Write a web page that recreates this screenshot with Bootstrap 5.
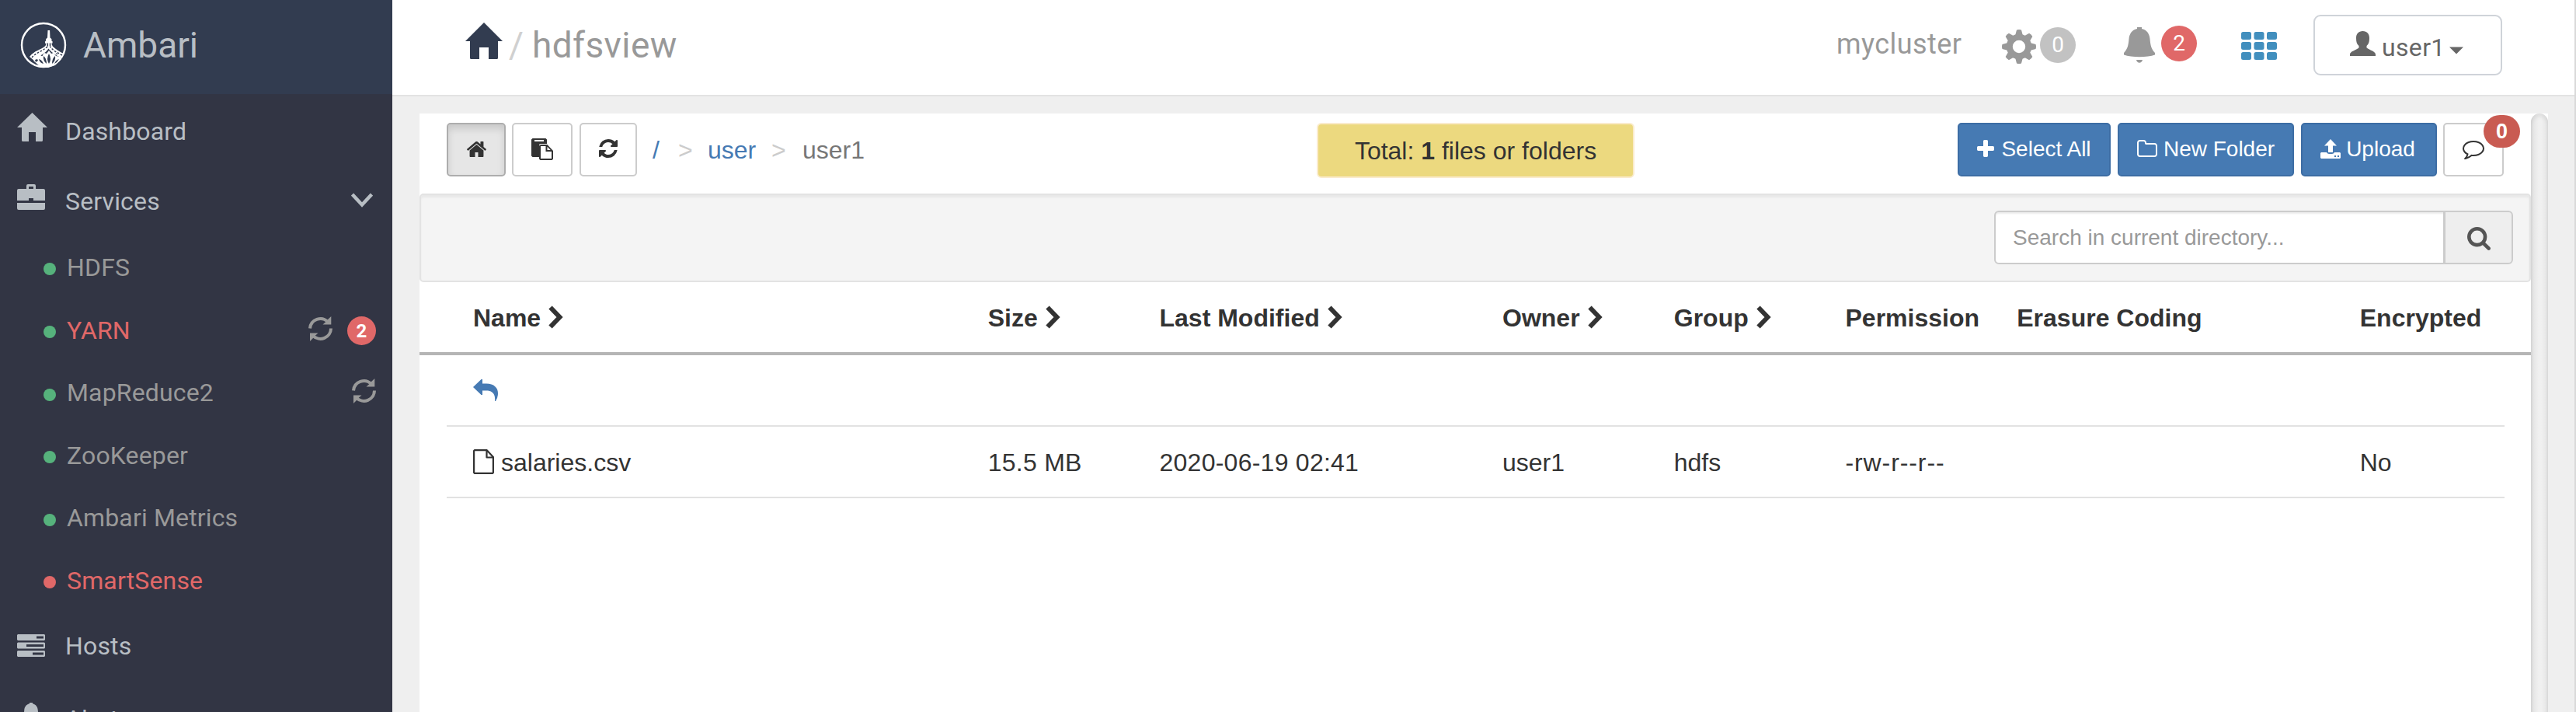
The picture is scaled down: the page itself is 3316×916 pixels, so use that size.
<!DOCTYPE html>
<html lang="en">
<head>
<meta charset="utf-8">
<title>Ambari - hdfsview</title>
<link href="https://cdn.jsdelivr.net/npm/bootstrap@5.3.0/dist/css/bootstrap.min.css" rel="stylesheet">
<style>
html,body{height:916px;overflow:hidden}
body{background:#efefef;font-family:"Liberation Sans",Arial,sans-serif;font-size:32px;line-height:1;color:#333}
svg{display:block;flex:none}
.app-shell{height:916px}
.side{width:505px;background:#323544;font-family:Roboto,sans-serif;letter-spacing:.15px;overflow:hidden}
.side-head{height:121px;background:#323c50;color:#b8bec4;font-size:46px;padding-left:26px}
.side-head .title{margin:-5px 0 0 21px;letter-spacing:0}
.side-item{color:#b8bec4;padding-left:22px;text-decoration:none}
.side-item .ico{width:62px}
.side-sub{height:80.6px;color:#999;padding-left:56px;padding-right:21px;text-decoration:none}
.side-sub.bad{color:#e06868}
.dot{width:16px;height:16px;border-radius:50%;background:#56b27c;margin:5px 14px 0 0;flex:none}
.dot.down{background:#e06868}
.count{border-radius:50%;color:#fff;background:#e06868;display:flex;align-items:center;justify-content:center;flex:none}
.count-sm{width:37px;height:37px;font-size:24px;font-weight:700;margin:2px 0 0 19px;letter-spacing:0}
.topbar{height:124px;background:#fff;border-bottom:2px solid #e3e3e3;font-family:Roboto,sans-serif;color:#999;padding-left:94px;padding-right:93px}
.crumb-title{font-size:46px;margin-top:35px;letter-spacing:.4px}
.cluster{font-size:36px;width:213px;margin-top:39px;letter-spacing:.45px}
.count-lg{width:46px;height:46px;font-size:28px}
.user-btn{width:243px;height:78px;margin:19px 0 0 47px;border:2px solid #cfd3d9;border-radius:9px;color:#666;padding:0}
.user-btn:hover{color:#666}
.edge{width:2px;background:#d9d9d9}
.page-area{padding:22px 34px 0 35px}
.panel{width:2718px;background:#fff}
.tools{height:103px;padding:12px 35px 0}
.tool-btn{height:69px;border:2px solid #ccc;border-radius:5px;background:#fff;padding:0;display:flex;align-items:center;justify-content:center;flex:none;font-size:28px;line-height:1;color:#333}
.tool-btn.on{background:#e6e6e6;border-color:#adadad;box-shadow:inset 0 6px 10px rgba(0,0,0,.125)}
.tool-btn.blue{background:#467ab3;border-color:#3d6da4;color:#fff;padding-bottom:2px}
.crumbs{margin-left:20px;margin-top:18.5px;width:855px;color:#777}
.crumbs a{color:#467ab3;text-decoration:none}
.crumbs i{font-style:normal;color:#ccc}
.total{width:409px;height:71px;border:2px solid #faebcc;border-radius:6px;background:#ecd97f}
.note-count{position:absolute;left:50px;top:-12px;width:47px;height:42px;border-radius:21px;background:#c95b52;color:#fff;font-weight:700;font-size:27px;display:flex;align-items:center;justify-content:center}
.filter-well{height:114px;background:#f4f4f4;border:2px solid #e3e3e3;border-radius:5px;box-shadow:inset 0 3px 3px rgba(0,0,0,.05);padding:20px 21px 0 0}
.search{width:668px;height:69px}
.search .form-control{height:69px;border:2px solid #ccc;border-radius:6px 0 0 6px;font-size:28px;line-height:1;padding:0 22px;box-shadow:inset 0 2px 2px rgba(0,0,0,.075)}
.search .form-control::placeholder{color:#999}
.search .input-group-text{width:89px;border:2px solid #ccc;border-radius:0 6px 6px 0;background:#eee;padding:0;justify-content:center}
.grid-row{--bs-gutter-x:0;padding-top:2px;align-items:center;white-space:nowrap}
.grid-row>div{padding-left:34.5px}
.heads{height:94px;border-bottom:4px solid #b5b5b5;padding-left:35px;padding-right:34px;font-weight:700;flex:none}
.entries{padding:0 34px 0 35px}
.entry{height:92px;border-bottom:2px solid #e2e2e2}
.entry>div:first-child,.heads>div:first-child{padding-left:34px}
.stamp{letter-spacing:.25px}
.perm{letter-spacing:.9px}
.chev{margin-left:10px}
.track{width:22px;background:#fff}
.track div{height:100%;border-radius:11px 11px 0 0;background:linear-gradient(90deg,#d9d9d9 0,#e6e6e6 15%,#f0f0f0 45%,#f0f0f0 60%,#e8e8e8 88%,#dfdfdf 100%);box-shadow:inset 0 4px 5px rgba(0,0,0,.07)}
</style>
</head>
<body>
<svg width="0" height="0" class="position-absolute" aria-hidden="true">
<symbol id="house" viewBox="0 0 39 37" preserveAspectRatio="none"><path fill="currentColor" d="M19.5 0L39 19H33V35.5Q33 37 31.5 37H24V25H15V37H7.5Q6 37 6 35.5V19H0Z"/></symbol>
<symbol id="bell" viewBox="0 0 40 46"><path fill="currentColor" d="M17 0h6v2c7 1.500 10 7 10.500 13 .8 9.500 2 13 6.500 18v2.500c-5 1.800-12 2.800-20 2.800S5 37.300 0 35.500V33c4.500-5 5.700-8.500 6.500-18C7 9 10 3.500 17 2zM16 42h8c-1 5-7 5-8 0z"/></symbol>
<symbol id="cycle" viewBox="0 0 31 32"><path fill="none" stroke="currentColor" stroke-width="4" d="M2 15.500A13.500 13.500 0 0 1 25 7M29 15.500A13.500 13.500 0 0 1 6 25"/><path fill="currentColor" d="M29.300 0V10.500H18.500L23 6.500 25 4zM2 32V21.500H12.500L8.500 25 6 28z"/></symbol>
<symbol id="chev" viewBox="0 0 19 30"><path fill="none" stroke="currentColor" stroke-width="6" d="M2.500 2.500L14.500 15 2.500 27.500"/></symbol>
<symbol id="refresh" viewBox="128 128 1536 1536"><path fill="currentColor" d="M1639 1056q0 5-1 7-64 268-268 434.500t-478 166.500q-146 0-282.500-55t-243.500-157l-129 129q-19 19-45 19t-45-19-19-45v-448q0-26 19-45t45-19h448q26 0 45 19t19 45-19 45l-137 137q71 66 161 102t187 36q134 0 250-65t186-179q11-17 53-117 8-23 30-23h192q13 0 22.500 9.500t9.500 22.500zm25-800v448q0 26-19 45t-45 19h-448q-26 0-45-19t-19-45 19-45l138-138q-148-137-349-137-134 0-250 65t-186 179q-11 17-53 117-8 23-30 23h-199q-13 0-22.500-9.500t-9.500-22.500v-7q65-268 270-434.500t480-166.500q146 0 284 55.500t245 156.500l130-129q19-19 45-19t45 19 19 45z"/></symbol>
</svg>

<div class="app-shell d-flex">
  <nav class="side flex-shrink-0 d-flex flex-column">
    <div class="side-head d-flex align-items-center flex-shrink-0">
      <svg width="60" height="60" viewBox="0 0 60 60" style="margin-top:-6px" fill="none" stroke="#fff">
        <circle cx="30" cy="30" r="28" stroke-width="2.400"/>
        <path fill="#fff" stroke="none" d="M35.500 11h2.600l.4 9.500 2 1.700-.2 2 1.500 1.600-.6 2.200h-1l1.500 3.500c4 4 9 7 14 9.500l-2.500 5.500C45 43 39 38 36.500 34.500 33 40 25 44 18 50l-6-5c6-8 15-9 20.500-14l1-3h-1.200l-.5-2.200 1.400-1.600-.2-2 2-1.700z"/>
        <path stroke="#323c50" stroke-width="1.400" stroke-dasharray="2.600 1.800" d="M15 46c6-7 14-8 20.500-14.500M54 43c-6-3-12-6-15.500-11"/>
        <path stroke="#323c50" stroke-width="1.500" d="M35.300 27.500v4M38.500 27.500v4"/>
        <path fill="#fff" stroke="none" d="M17 50l8-7 3 1 3-4 3 1 3-4 3 4 3-1 3 4 5 1 2 3-8 8-9 3h-9z"/>
        <g fill="#323c50" stroke="none"><path d="M37 41q-4 7 0 13 4-6 0-13zM30 44q-1 6 4 10 0-7-4-10zM45 44q1 6-4 10 0-7 4-10zM24 48q1 5 6 6-2-5-6-6zM50 48q-2 4-6 6 2-5 6-6z"/><path d="M19 49l3-1 1 2-3 2zM27 43l2-1v2zM46 40l2 1-1 2z"/></g>
      </svg>
      <span class="title">Ambari</span>
    </div>
    <a class="side-item d-flex align-items-center flex-shrink-0" style="height:96px"><span class="ico"><svg width="39" height="37" style="margin-top:-11px"><use href="#house"/></svg></span>Dashboard</a>
    <a class="side-item d-flex align-items-center flex-shrink-0" style="height:84px;margin-bottom:2.700px">
      <span class="ico"><svg width="36" height="33" viewBox="0 0 36 33" style="margin-top:-12px"><path fill="currentColor" fill-rule="evenodd" d="M12 6V2q0-2 2-2h8q2 0 2 2v4h10q2 0 2 2v13H21v-3h-6v3H0V8q0-2 2-2zM15 3v3h6V3zM0 24h36v7q0 2-2 2H2q-2 0-2-2z"/></svg></span>Services
      <svg class="ms-auto" width="28" height="20" viewBox="0 0 28 20" style="margin-right:25px;margin-top:-3px"><path fill="none" stroke="currentColor" stroke-width="4.500" d="M1.500 2L14 15.500 26.500 2"/></svg>
    </a>
    <a class="side-sub d-flex align-items-center flex-shrink-0"><span class="dot"></span>HDFS</a>
    <a class="side-sub bad d-flex align-items-center flex-shrink-0"><span class="dot"></span>YARN<svg class="ms-auto" width="31" height="32" style="color:#999;margin-top:-4px"><use href="#cycle"/></svg><span class="count count-sm">2</span></a>
    <a class="side-sub d-flex align-items-center flex-shrink-0"><span class="dot"></span>MapReduce2<svg class="ms-auto" width="31" height="32" style="margin-top:-5px"><use href="#cycle"/></svg></a>
    <a class="side-sub d-flex align-items-center flex-shrink-0"><span class="dot"></span>ZooKeeper</a>
    <a class="side-sub d-flex align-items-center flex-shrink-0"><span class="dot"></span>Ambari Metrics</a>
    <a class="side-sub bad d-flex align-items-center flex-shrink-0"><span class="dot down"></span>SmartSense</a>
    <a class="side-item d-flex align-items-center flex-shrink-0" style="height:87.400px"><span class="ico"><svg width="36" height="29" viewBox="0 0 36 29"><path fill="currentColor" fill-rule="evenodd" d="M1 0h34l1 1v6l-1 1H1L0 7V1zM25 2.500v3h9v-3zM1 10.500h34l1 1v6l-1 1H1l-1-1v-6zM12 13v3h22v-3zM1 21h34l1 1v6l-1 1H1l-1-1v-6zM20 23.500v3h14v-3z"/></svg></span>Hosts</a>
    <a class="side-item d-flex align-items-center flex-shrink-0" style="height:100px"><span class="ico" style="padding-left:5px"><svg width="26" height="34" style="margin-top:-12px"><use href="#bell"/></svg></span>Alerts</a>
  </nav>

  <div class="flex-grow-1 d-flex flex-column">
    <header class="topbar d-flex align-items-start flex-shrink-0">
      <svg width="48" height="47" viewBox="0 0 48 47" style="color:#323c50;margin-top:29px"><path fill="currentColor" d="M24 0L48 24H42V45.500Q42 47 40.500 47H30V32H18V47H7.500Q6 47 6 45.500V24H0Z"/></svg>
      <span class="crumb-title" style="color:#d0d0d0;margin-left:8px;width:30px">/</span>
      <span class="crumb-title">hdfsview</span>
      <span class="cluster ms-auto">mycluster</span>
      <svg width="44" height="44" viewBox="-22 -22 44 44" style="margin-top:38px;color:#999"><circle r="12.200" fill="none" stroke="currentColor" stroke-width="8"/><g fill="currentColor"><path id="tooth" d="M-5-14L-3-21.500Q0-22.500 3-21.500L5-14V-12H-5zM-5 14L-3 21.500Q0 22.500 3 21.500L5 14V12H-5z"/><use href="#tooth" transform="rotate(45)"/><use href="#tooth" transform="rotate(90)"/><use href="#tooth" transform="rotate(135)"/></g></svg>
      <span class="count count-lg" style="background:#c2c2c2;margin:35px 0 0 5px">0</span>
      <svg width="40" height="46" style="margin:35px 0 0 62px"><use href="#bell"/></svg>
      <span class="count count-lg" style="margin:33px 0 0 8px">2</span>
      <svg width="46" height="36" viewBox="0 0 46 36" fill="#428fbe" style="margin:41px 0 0 57px"><rect width="13" height="10" rx="2.500"/><rect x="16.500" width="13" height="10" rx="2.500"/><rect x="33" width="13" height="10" rx="2.500"/><rect y="13" width="13" height="10" rx="2.500"/><rect x="16.500" y="13" width="13" height="10" rx="2.500"/><rect x="33" y="13" width="13" height="10" rx="2.500"/><rect y="26" width="13" height="10" rx="2.500"/><rect x="16.500" y="26" width="13" height="10" rx="2.500"/><rect x="33" y="26" width="13" height="10" rx="2.500"/></svg>
      <button class="user-btn btn d-flex align-items-start">
        <svg width="33" height="32" viewBox="0 0 33 32" style="margin:19px 0 0 45px"><path fill="currentColor" d="M16.500 0C22 0 25 3.500 25 9c0 5-1 8-3.500 10v2.500C25 24.500 33 26 33 30v2H0v-2c0-4 8-5.500 11.500-8.500V19C9 17 8 14 8 9c0-5.500 3-9 8.500-9z"/></svg>
        <span style="font:32px/1 Roboto,sans-serif;letter-spacing:.35px;margin:24px 0 0 8px;width:80px;text-align:left">user1</span>
        <svg width="18" height="10" viewBox="0 0 18 10" style="margin:39px 0 0 7px"><path fill="currentColor" d="M0 .5h18L9 9.500z"/></svg>
      </button>
    </header>

    <main class="page-area d-flex flex-grow-1">
      <section class="panel flex-shrink-0">
        <div class="tools d-flex align-items-start">
          <button class="tool-btn on" style="width:76px"><svg width="25" height="20" viewBox="90 256 1612 1280" preserveAspectRatio="none" style="margin-top:-2px"><path fill="currentColor" d="M1472 992v480q0 26-19 45t-45 19h-384v-384h-256v384h-384q-26 0-45-19t-19-45v-480q0-1 .5-3t.5-3l575-474 575 474q1 2 1 6zm223-69l-62 74q-8 9-21 11h-3q-13 0-21-7l-692-577-692 577q-12 8-24 7-13-2-21-11l-62-74q-8-10-7-23.500t11-21.500l719-599q32-26 76-26t76 26l244 204v-195q0-14 9-23t23-9h192q14 0 23 9t9 23v408l219 182q10 8 11 21.500t-7 23.500z"/></svg></button>
          <button class="tool-btn" style="width:78px;margin-left:8px"><svg width="28" height="28" viewBox="0 0 28 28" style="margin-top:-2px"><path fill="currentColor" fill-rule="evenodd" d="M1.500 0H18.500L20 1.500V7H12Q10 7 10 9V24H1.500L0 22.500V1.500zM4 2V4H16V2zM12 8H20.500L28 16V26.500L26.500 28H11.500L10 26.500V9.500zM12 10V26H26V17H18.500V10zM20.500 10.800V15H24.700z"/></svg></button>
          <button class="tool-btn" style="width:74px;margin-left:9px"><svg width="24" height="24" style="margin-top:-3px"><use href="#refresh"/></svg></button>
          <div class="crumbs d-flex"><a href="#" style="width:33px">/</a><i style="width:38px">&gt;</i><a href="#" style="width:82px">user</a><i style="width:40px">&gt;</i><span>user1</span></div>
          <div class="total d-flex align-items-center justify-content-center"><span>Total: <b>1</b> files or folders</span></div>
          <button class="tool-btn blue ms-auto" style="width:197px"><svg width="22" height="22" viewBox="192 128 1408 1408" style="margin:-2px 9px 0 0"><path fill="currentColor" d="M1600 736v192q0 40-28 68t-68 28h-416v416q0 40-28 68t-68 28h-192q-40 0-68-28t-28-68v-416h-416q-40 0-68-28t-28-68v-192q0-40 28-68t68-28h416v-416q0-40 28-68t68-28h192q40 0 68 28t28 68v416h416q40 0 68 28t28 68z"/></svg>Select All</button>
          <button class="tool-btn blue" style="width:227px;margin-left:9px"><svg width="26" height="22" viewBox="64 128 1664 1408" style="margin:-2px 8px 0 0"><path fill="currentColor" d="M1600 1312v-704q0-40-28-68t-68-28h-704q-40 0-68-28t-28-68v-64q0-40-28-68t-68-28h-320q-40 0-68 28t-28 68v960q0 40 28 68t68 28h1216q40 0 68-28t28-68zm128-704v704q0 92-66 158t-158 66h-1216q-92 0-158-66t-66-158v-960q0-92 66-158t158-66h320q92 0 158 66t66 158v32h672q92 0 158 66t66 158z"/></svg>New Folder</button>
          <button class="tool-btn blue" style="width:175px;margin-left:9px;padding-right:3px"><svg width="26" height="25" viewBox="0 0 26 25" style="margin:-1px 7px 0 0"><path fill="currentColor" fill-rule="evenodd" d="M13 0l8 8.500H16V17h-6V8.500H5zM1 17h7q1 2 3 2h4q2 0 3-2h7l1 1v6l-1 1H1l-1-1v-6zM18 21v2h2v-2zM22 21v2h2v-2z"/></svg>Upload</button>
          <button class="tool-btn position-relative" style="width:78px;margin-left:8px"><svg width="28" height="24" viewBox="0 256 1792 1536" style="margin:1px 0 0 0"><path fill="currentColor" d="M896 384q-204 0-381.500 69.500t-282 187.500-104.500 255q0 112 71.500 213.500t201.500 175.500l87 50-27 96q-24 91-70 172 152-63 275-171l43-38 57 6q69 8 130 8 204 0 381.500-69.500t282-187.500 104.500-255-104.500-255-282-187.500-381.500-69.500zm896 512q0 174-120 321.500t-326 233-450 85.500q-70 0-145-8-198 175-460 242-49 14-114 22h-5q-15 0-27-10.500t-16-27.500v-1q-3-4-.5-12t2-10 4.500-9.500l6-9 7-8.500 8-9q7-8 31-34.500t34.500-38 31-39.500 32.500-51 27-59 26-76q-157-89-247.500-220t-90.500-281q0-174 120-321.500t326-233 450-85.500 450 85.500 326 233 120 321.500z"/></svg><span class="note-count">0</span></button>
        </div>
        <div class="filter-well">
          <div class="search input-group ms-auto flex-nowrap">
            <input class="form-control" type="text" placeholder="Search in current directory...">
            <span class="input-group-text"><svg width="30" height="30" viewBox="64 128 1664 1664" style="color:#555;margin-top:2px"><path fill="currentColor" d="M1216 832q0-185-131.500-316.500t-316.500-131.500-316.500 131.500-131.500 316.500 131.500 316.500 316.500 131.500 316.500-131.500 131.500-316.500zm512 832q0 52-38 90t-90 38q-54 0-90-38l-343-342q-179 124-399 124-143 0-273.500-55.500t-225-150-150-225-55.500-273.500 55.500-273.500 150-225 225-150 273.500-55.500 273.500 55.500 225 150 150 225 55.500 273.500q0 220-124 399l343 343q37 37 37 90z"/></svg></span>
          </div>
        </div>
        <div class="heads grid-row row">
          <div class="col-3 d-flex">Name<svg class="chev" width="19" height="30"><use href="#chev"/></svg></div>
          <div class="col-1 d-flex">Size<svg class="chev" width="19" height="30"><use href="#chev"/></svg></div>
          <div class="col-2 d-flex">Last Modified<svg class="chev" width="19" height="30"><use href="#chev"/></svg></div>
          <div class="col-1 d-flex">Owner<svg class="chev" width="19" height="30"><use href="#chev"/></svg></div>
          <div class="col-1 d-flex">Group<svg class="chev" width="19" height="30"><use href="#chev"/></svg></div>
          <div class="col-1">Permission</div>
          <div class="col-2">Erasure Coding</div>
          <div class="col-1">Encrypted</div>
        </div>
        <div class="entries">
          <div class="entry grid-row row">
            <div class="col-12"><svg width="32" height="28" viewBox="0 0 32 28" style="color:#467ab3;margin-top:-2px"><path fill="currentColor" d="M0 10L10.500 0H12V5.500H17C27 5.500 32 11 32 18Q32 24 29 28H28C29 19 25 14.500 17 14.500H12V20H10.500z"/></svg></div>
          </div>
          <div class="entry grid-row row">
            <div class="col-3 d-flex align-items-center"><svg width="27" height="32" viewBox="0 0 27 32" style="margin:-2px 9px 0 0"><path fill="none" stroke="currentColor" stroke-width="2.200" stroke-linejoin="round" d="M17 1.100H2L1.100 2V30L2 30.900H25L25.900 30V10L17.500 1.100V10.500H25.900"/></svg>salaries.csv</div>
            <div class="col-1 stamp">15.5 MB</div>
            <div class="col-2 stamp">2020-06-19 02:41</div>
            <div class="col-1">user1</div>
            <div class="col-1">hdfs</div>
            <div class="col-1 perm">-rw-r--r--</div>
            <div class="col-2"></div>
            <div class="col-1">No</div>
          </div>
        </div>
      </section>
      <div class="track flex-shrink-0"><div></div></div>
    </main>
  </div>
  <div class="edge flex-shrink-0"></div>
</div>
<script src="https://cdn.jsdelivr.net/npm/bootstrap@5.3.0/dist/js/bootstrap.bundle.min.js"></script>
</body>
</html>
